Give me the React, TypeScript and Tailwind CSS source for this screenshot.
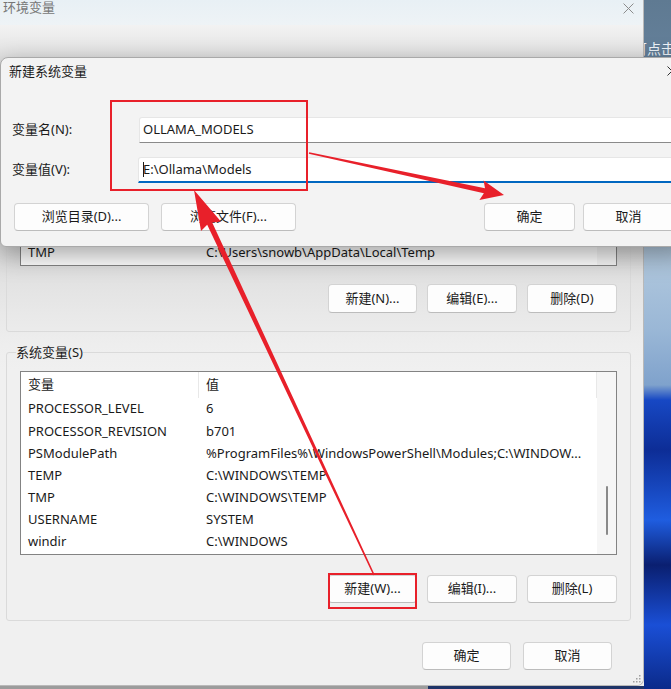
import React from "react";

type Row = [string, string];

const sysRows: Row[] = [
  ["PROCESSOR_LEVEL", "6"],
  ["PROCESSOR_REVISION", "b701"],
  ["PSModulePath", "%ProgramFiles%\\WindowsPowerShell\\Modules;C:\\WINDOW..."],
  ["TEMP", "C:\\WINDOWS\\TEMP"],
  ["TMP", "C:\\WINDOWS\\TEMP"],
  ["USERNAME", "SYSTEM"],
  ["windir", "C:\\WINDOWS"],
];

const userRows: Row[] = [
  ["OneDrive", "C:\\Users\\snowb\\OneDrive"],
  ["OneDriveConsumer", "C:\\Users\\snowb\\OneDrive"],
  ["Path", "C:\\Users\\snowb\\AppData\\Local\\Microsoft\\WindowsApps;"],
  ["TEMP", "C:\\Users\\snowb\\AppData\\Local\\Temp"],
  ["TMP", "C:\\Users\\snowb\\AppData\\Local\\Temp"],
];

function Btn({ children, className }: { children: React.ReactNode; className: string }) {
  return (
    <div
      className={`flex items-center justify-center rounded-[4px] border border-[#d3d3d3] border-b-[#bcbcbc] bg-[#fdfdfd] text-[#1a1a1a] ${className}`}
    >
      {children}
    </div>
  );
}

function CloseX({ color, size }: { color: string; size: number }) {
  return (
    <svg width={size} height={size} viewBox="0 0 10 10">
      <path d="M0.5 0.5 L9.5 9.5 M9.5 0.5 L0.5 9.5" stroke={color} strokeWidth="0.9" fill="none" />
    </svg>
  );
}

function VarRow({ r }: { r: Row }) {
  return (
    <div className="flex h-[22.2px] shrink-0 items-center whitespace-nowrap text-[13px]">
      <div className="w-[178px] shrink-0 pl-[7px]">{r[0]}</div>
      <div className="min-w-0 flex-1 overflow-hidden pl-[7px]">{r[1]}</div>
    </div>
  );
}

function ListHeader() {
  return (
    <div className="flex h-[26px] shrink-0 items-center text-[13px]">
      <div className="flex h-full w-[178px] items-center border-r border-[#e8e8e8] pl-[7px]">变量</div>
      <div className="flex h-full flex-1 items-center border-r border-[#e8e8e8] pl-[7px]">值</div>
    </div>
  );
}

function BgWindow() {
  return (
    <div className="relative flex h-[686px] w-[644px] flex-col overflow-hidden rounded-br-[7px] border-r border-b border-[#b9b9b9] bg-[#f0f0f0]">
      {/* title bar */}
      <div className="flex h-[25px] shrink-0 items-start justify-between bg-[linear-gradient(180deg,#e8f0f5,#eef3f6)] pl-[3px] pr-[9px]">
        <div className="text-[13px] leading-[15px] text-[#777777]">环境变量</div>
        <div className="mt-[3px]">
          <CloseX color="#8a8a8a" size={11} />
        </div>
      </div>
      {/* body */}
      <div className="flex flex-1 flex-col bg-[linear-gradient(180deg,#f2f2f2_0px,#e2e2e2_32px,#d8d8d8_200px,#dedede_235px,#e6e6e6_275px,#eeeeee_320px,#f0f0f0_345px,#f0f0f0_100%)] pl-[6px] pr-[12px]">
        {/* user variables */}
        <fieldset className="mt-[31px] rounded-[3px] border border-[#dadada] px-[13px] pb-[18px]">
          <legend className="ml-[-4px] text-[13px] leading-[16px]">snowb 的用户变量(U)</legend>
          <div className="flex h-[194px] border border-[#838383] bg-white">
            <div className="flex min-w-0 flex-1 flex-col">
              <ListHeader />
              <div className="flex flex-1 flex-col justify-end pb-[1px]">
                {userRows.map((r) => (
                  <VarRow key={r[0]} r={r} />
                ))}
              </div>
            </div>
            <div className="w-[19px] shrink-0 bg-[#f6f6f6]" />
          </div>
          <div className="mt-[18px] flex justify-end gap-[10px] text-[13px]">
            <Btn className="h-[29px] w-[89px]">新建(N)...</Btn>
            <Btn className="h-[29px] w-[90px]">编辑(E)...</Btn>
            <Btn className="h-[29px] w-[90px]">删除(D)</Btn>
          </div>
        </fieldset>

        {/* system variables */}
        <fieldset className="mt-[12px] rounded-[3px] border border-[#dadada] px-[13px] pb-[17px]">
          <legend className="ml-[-4px] text-[13px] leading-[16px]">系统变量(S)</legend>
          <div className="mt-[11px] flex h-[184px] border border-[#838383] bg-white">
            <div className="flex min-w-0 flex-1 flex-col">
              <ListHeader />
              {sysRows.map((r) => (
                <VarRow key={r[0]} r={r} />
              ))}
            </div>
            <div className="flex w-[19px] shrink-0 justify-center bg-[#f6f6f6]">
              <div className="mt-[114px] h-[49px] w-[2px] rounded-full bg-[#8a8a8a]" />
            </div>
          </div>
          <div className="mt-[20px] flex justify-end gap-[10px] text-[13px]">
            <Btn className="h-[28px] w-[89px]">新建(W)...</Btn>
            <Btn className="h-[28px] w-[90px]">编辑(I)...</Btn>
            <Btn className="h-[28px] w-[90px]">删除(L)</Btn>
          </div>
        </fieldset>

        <div className="mt-[21px] flex justify-end gap-[12px] pr-[19px] text-[13px]">
          <Btn className="h-[28px] w-[89px]">确定</Btn>
          <Btn className="h-[28px] w-[89px]">取消</Btn>
        </div>
      </div>
      {/* resize grip */}
      <svg className="absolute bottom-[2px] right-[2px]" width="8" height="8" viewBox="0 0 8 8">
        <rect x="6" y="0" width="1.5" height="1.5" fill="#a0a0a0" />
        <rect x="3" y="3" width="1.5" height="1.5" fill="#a0a0a0" />
        <rect x="6" y="3" width="1.5" height="1.5" fill="#a0a0a0" />
        <rect x="0" y="6" width="1.5" height="1.5" fill="#a0a0a0" />
        <rect x="3" y="6" width="1.5" height="1.5" fill="#a0a0a0" />
        <rect x="6" y="6" width="1.5" height="1.5" fill="#a0a0a0" />
      </svg>
    </div>
  );
}

function Dialog() {
  return (
    <div className="absolute left-0 top-[57px] flex h-[190px] w-[690px] flex-col rounded-tl-[8px] rounded-bl-[6px] border border-[#a9a9a9] bg-[#f3f3f3] shadow-[0_8px_26px_rgba(0,0,0,0.36)]">
      <div className="flex h-[26px] shrink-0 items-center justify-between pl-[8px] pr-[12px]">
        <div className="text-[13px] leading-[16px]">新建系统变量</div>
        <CloseX color="#1a1a1a" size={10} />
      </div>
      <div className="mt-[33px] flex h-[26px] items-center pr-[12px] text-[13px]">
        <div className="w-[138px] shrink-0 pl-[11px]">变量名(N):</div>
        <div className="flex h-full flex-1 items-center rounded-t-[3px] border border-[#e6e6e6] border-b-[#8a8a8a] bg-white pl-[3px]">
          OLLAMA_MODELS
        </div>
      </div>
      <div className="mt-[14px] flex h-[26px] items-center pr-[12px] text-[13px]">
        <div className="w-[137px] shrink-0 pl-[11px]">变量值(V):</div>
        <div className="flex h-full flex-1 items-center rounded-t-[3px] border border-b-2 border-[#e6e6e6] border-b-[#0067c0] bg-white pl-[4px]">
          <span className="mr-[-1px] inline-block h-[15px] w-px bg-[#1a1a1a]" />
          <span>{"E:\\Ollama\\Models"}</span>
        </div>
      </div>
      <div className="mt-[20px] flex justify-between pl-[13px] pr-[15px] text-[13px]">
        <div className="flex gap-[12px]">
          <Btn className="h-[28px] w-[135px]">浏览目录(D)...</Btn>
          <Btn className="h-[28px] w-[135px]">浏览文件(F)...</Btn>
        </div>
        <div className="flex gap-[8px]">
          <Btn className="h-[28px] w-[91px]">确定</Btn>
          <Btn className="h-[28px] w-[91px]">取消</Btn>
        </div>
      </div>
    </div>
  );
}

function arrowPoints(
  tx: number,
  ty: number,
  hx: number,
  hy: number,
  tailW: number,
  shaftW: number,
  headLen: number,
  headW: number
) {
  const dx = hx - tx;
  const dy = hy - ty;
  const L = Math.hypot(dx, dy);
  const ux = dx / L;
  const uy = dy / L;
  const nx = -uy;
  const ny = ux;
  const bx = hx - ux * headLen;
  const by = hy - uy * headLen;
  const nbx = bx + ux * 3;
  const nby = by + uy * 3;
  const pts: [number, number][] = [
    [tx + (nx * tailW) / 2, ty + (ny * tailW) / 2],
    [nbx + (nx * shaftW) / 2, nby + (ny * shaftW) / 2],
    [bx + nx * headW, by + ny * headW],
    [hx, hy],
    [bx - nx * headW, by - ny * headW],
    [nbx - (nx * shaftW) / 2, nby - (ny * shaftW) / 2],
    [tx - (nx * tailW) / 2, ty - (ny * tailW) / 2],
  ];
  return pts.map((p) => `${p[0].toFixed(1)},${p[1].toFixed(1)}`).join(" ");
}

function Annotations() {
  const red = "#e8202a";
  return (
    <svg className="pointer-events-none absolute left-0 top-0" width="671" height="689" viewBox="0 0 671 689">
      <rect x="111" y="101" width="196" height="89" fill="none" stroke={red} strokeWidth="2" />
      <rect x="329" y="574" width="87" height="34" fill="none" stroke={red} strokeWidth="2" />
      <polygon points={arrowPoints(309, 153, 504, 195, 1.5, 5, 23, 10)} fill={red} />
      <polygon points={arrowPoints(374, 575, 194, 190, 1.5, 5.5, 40, 11)} fill={red} />
    </svg>
  );
}

export default function App() {
  return (
    <div className="relative flex h-[689px] w-[671px] overflow-hidden bg-[#f0f0f0] font-['Noto_Sans','Noto_Sans_CJK_SC',sans-serif] text-[#1a1a1a]">
      <div className="flex w-[644px] shrink-0 flex-col">
        <BgWindow />
        <div className="flex h-[3px]">
          <div className="w-[428px] bg-[#9c9c9c]" />
          <div className="flex-1 bg-[#1f3468]" />
        </div>
      </div>
      <div className="flex-1 overflow-hidden bg-[linear-gradient(180deg,#5f7a92_0px,#64809a_60px,#b2c9de_250px,#9ab7d6_330px,#7fa2cc_385px,#1748c4_400px,#0d2d96_450px,#1f5de0_520px,#0a1f70_565px,#1a4fd6_625px,#0b2a8a_689px)]">
        <div className="ml-[-11px] mt-[40px] whitespace-nowrap text-[14px] leading-[18px] text-[#eef3f8]">可点击</div>
      </div>
      <Dialog />
      <Annotations />
    </div>
  );
}
